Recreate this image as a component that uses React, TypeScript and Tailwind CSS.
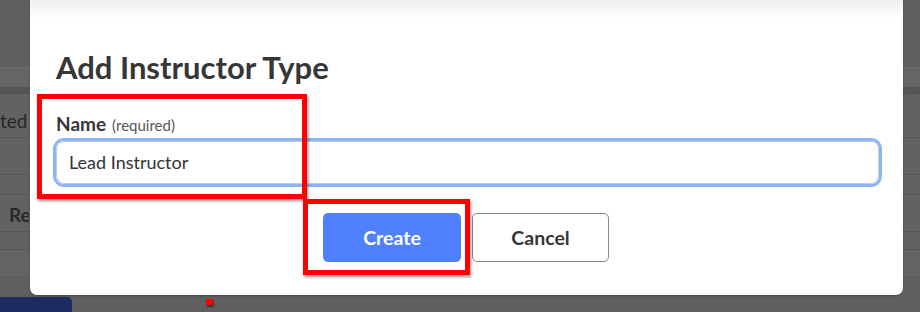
import React from "react";

export default function App() {
  return (
    <div
      className="relative w-[920px] h-[312px] overflow-hidden bg-[#5f5f5f]"
      style={{ fontFamily: "Lato, 'Noto Sans', sans-serif" }}
    >
      {/* page behind the backdrop */}
      <div className="flex flex-col w-full text-[#262626]">
        <div className="h-[67px] bg-[#5f5f5f]" />
        <div className="h-[20px] border-t border-[#6a6a6a] bg-[#656565]" />
        <div className="h-[7px] bg-[#555555]" />
        <div className="h-[44px] border-b border-[#575757] bg-[#626262] flex items-center pt-[10px]">
          <div className="w-[29px] overflow-hidden whitespace-nowrap text-[19px] leading-none">
            ted S
          </div>
        </div>
        <div className="h-[37px] border-b border-[#575757] bg-[#626262]" />
        <div className="h-[20px] border-b border-[#575757] bg-[#626262]" />
        <div className="h-[37px] border-b border-[#575757] bg-[#626262] flex items-center pt-[3px]">
          <div className="w-[29px] overflow-hidden whitespace-nowrap pl-[9px] text-[19px] font-bold leading-none text-[#2a2a2a]">
            Res
          </div>
        </div>
        <div className="h-[18px] border-b border-[#575757] bg-[#626262]" />
        <div className="h-[28px] border-b border-[#5a5a5a] bg-[#646464]" />
        <div className="h-[34px] flex items-end">
          <div className="w-[72px] h-[15px] bg-[#1c2b60] rounded-tr-[5px]" />
        </div>
      </div>

      {/* modal */}
      <div className="absolute left-[30px] top-0 w-[873px] h-[295px] rounded-b-[7px] bg-white shadow-[0_1px_2px_rgba(0,0,0,0.25)] overflow-hidden">
        <div className="absolute inset-x-0 top-0 h-[18px] bg-linear-to-b from-[#efefef] to-white" />
        <div className="relative flex flex-col pl-[26px] pr-[24px] pt-[49px]">
          <h2 className="text-[31px] leading-[1.2] font-bold text-[#363636]">
            Add Instructor Type
          </h2>
          <div className="mt-[27px] flex items-baseline leading-[1.2]">
            <span className="text-[19px] font-bold text-[#363636]">Name</span>
            <span className="ml-[6px] text-[15px] text-[#555555]">(required)</span>
          </div>
          <div className="mt-[5px] h-[43px] w-[823px] rounded-[8px] border border-[#c9c9c9] shadow-[0_0_0_3px_#8cb6fa] flex items-center pl-[12px] text-[18px] leading-[1.2] text-[#333333]">
            Lead Instructor
          </div>
          <div className="mt-[29px] flex gap-[11px] ml-[267px]">
            <button className="w-[138px] h-[49px] rounded-[5px] bg-[#5081fc] text-white text-[19.5px] font-bold leading-[1.2]">
              Create
            </button>
            <button className="w-[137px] h-[49px] rounded-[5px] border border-[#8a8a8a] bg-white text-[#363636] text-[19.5px] font-bold leading-[1.2]">
              Cancel
            </button>
          </div>
        </div>
      </div>

      {/* annotations */}
      <div className="absolute left-[37px] top-[94px] w-[270px] h-[105px] border-[5px] border-[#ff0000] shadow-[1px_2px_3px_rgba(0,0,0,0.45)]" />
      <div className="absolute left-[303px] top-[199px] w-[167px] h-[76px] border-[5px] border-[#ff0000] shadow-[1px_2px_3px_rgba(0,0,0,0.45)]" />
      <div className="absolute left-[206px] top-[299px] w-[7px] h-[6px] bg-[#ff0000] shadow-[1px_2px_2px_rgba(0,0,0,0.45)]" />
    </div>
  );
}
